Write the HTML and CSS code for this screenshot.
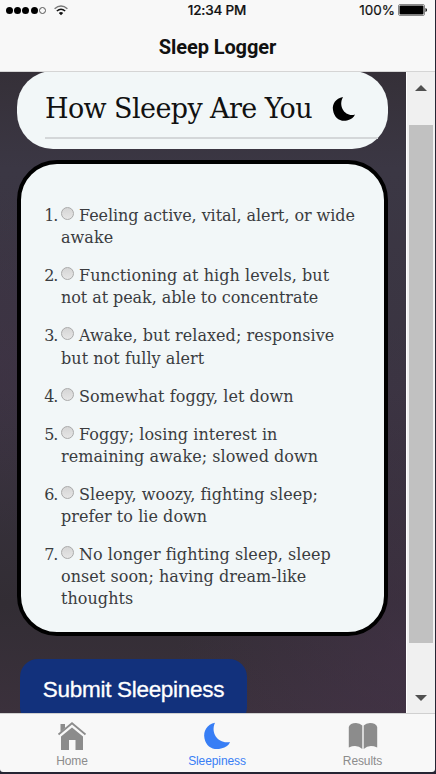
FILE: index.html
```html
<!DOCTYPE html>
<html lang="en">
<head>
<meta charset="utf-8">
<title>Sleep Logger</title>
<link rel="stylesheet" href="styles.css">
</head>
<body>
<div class="phone">
  <header class="header">
    <div class="status">
      <div class="signal">
        <i></i><i></i><i></i><i></i><i class="empty"></i>
        <svg class="wifi" width="14" height="11" viewBox="0 0 14 11" fill="none" stroke="#111" stroke-width="1.5"><path d="M.6 3.7Q7-1.7 13.4 3.7" stroke="#777"/><path d="M2.8 6Q7 2.5 11.2 6"/><path d="M4.8 8Q7 6.2 9.2 8L7 10.2Z" fill="#111" stroke="none"/></svg>
      </div>
      <time class="clock">12:34 PM</time>
      <div class="power"><span>100%</span><svg width="30" height="12" viewBox="0 0 30 12"><rect x=".5" y=".5" width="26" height="11" rx="1.5" fill="#fff" stroke="#888"/><rect x="1.5" y="1.5" width="24" height="9" rx="1"/><path d="M27.5 4Q29 4.5 29 6T27.5 8Z"/></svg></div>
    </div>
    <h1 class="title">Sleep Logger</h1>
  </header>
  <main class="viewport">
    <div class="content">
      <section class="heading">
        <div class="heading-row">
          <h2>How Sleepy Are You</h2>
          <svg class="moon" width="24" height="26" viewBox="0 0 24 26"><path d="M11 1C3.5 2.5 0 8 1 14C2.2 22 8 26 15 24.5C19 23.5 22 21.5 23 18.5C14 21.5 5.500 11 11 1Z"/></svg>
        </div>
      </section>
      <section class="card">
        <ol class="options">
          <li><span class="num">1.</span><label><span class="line tight"><i class="radio"></i>Feeling active, vital, alert, or wide</span><span class="line">awake</span></label></li>
          <li><span class="num">2.</span><label><span class="line"><i class="radio"></i>Functioning at high levels, but</span><span class="line tight">not at peak, able to concentrate</span></label></li>
          <li><span class="num">3.</span><label><span class="line"><i class="radio"></i>Awake, but relaxed; responsive</span><span class="line">but not fully alert</span></label></li>
          <li><span class="num">4.</span><label><span class="line"><i class="radio"></i>Somewhat foggy, let down</span></label></li>
          <li><span class="num">5.</span><label><span class="line"><i class="radio"></i>Foggy; losing interest in</span><span class="line">remaining awake; slowed down</span></label></li>
          <li><span class="num">6.</span><label><span class="line"><i class="radio"></i>Sleepy, woozy, fighting sleep;</span><span class="line">prefer to lie down</span></label></li>
          <li><span class="num">7.</span><label><span class="line"><i class="radio"></i>No longer fighting sleep, sleep</span><span class="line">onset soon; having dream-like</span><span class="line">thoughts</span></label></li>
        </ol>
      </section>
      <button class="submit">Submit Sleepiness</button>
    </div>
    <div class="scrollbar">
      <i class="arrow up"></i><i class="thumb"></i><i class="arrow down"></i>
    </div>
  </main>
  <nav class="tabs">
    <a class="tab"><svg width="30" height="30" viewBox="0 0 30 30"><path d="M3.500 3h4.500v4L3.500 11ZM15 6.500L26 15.500V29H18.500V19H12V29H4V15.500Z"/><path d="M1.500 13.500L15 2.200L28.500 13.500" fill="none" stroke="currentColor" stroke-width="1.800"/></svg><span>Home</span></a>
    <a class="tab active"><svg width="30" height="30" viewBox="0 0 30 30"><path d="M13 1.800C5 3.500 1 10 2.500 17.500C4.200 26 11.500 29.500 19 27.500C24 26.500 27 24 28 21C17 23.500 8 12.500 13 1.800Z"/></svg><span>Sleepiness</span></a>
    <a class="tab"><svg width="30" height="30" viewBox="0 0 30 30"><path d="M14.300 4.500V28Q9 23 .8 26.500V6Q2 2 8 2Q12 2 14.300 4.500ZM15.700 4.500V28Q21 23 29.200 26.500V6Q28 2 22 2Q18 2 15.700 4.500Z"/></svg><span>Results</span></a>
  </nav>
</div>
</body>
</html>
```
FILE: styles.css
```css
* { box-sizing: border-box; }
body { margin: 0; background: #252533; font-family: Roboto, sans-serif; }
.phone { width: 435px; height: 772px; display: flex; flex-direction: column; background: #f8f8f8; border-radius: 0 0 3px 3px; overflow: hidden; }
.header { height: 72px; flex: none; border-bottom: 1px solid #d5d5d5; }
.status { height: 20px; display: grid; grid-template-columns: 1fr auto 1fr; align-items: center; padding: 0 7px 0 6px; font-size: 14px; color: #111; -webkit-text-stroke: .2px; }
.signal { display: flex; align-items: center; gap: 1.2px; }
.signal i { width: 7px; height: 7px; border-radius: 50%; background: #000; }
.signal .empty { background: none; border: 1px solid #555; }
.wifi { margin-left: 7px; }
.clock { font: 500 13.5px Inter, sans-serif; letter-spacing: -.2px; }
.power { display: flex; justify-content: flex-end; align-items: center; gap: 3px; font-family: Inter, sans-serif; font-size: 13.5px; }
.title { margin: 15px 0 0; text-align: center; font: 700 20px/24px Roboto, sans-serif; letter-spacing: -.1px; color: #111; }
.viewport { height: 641px; flex: none; display: flex; overflow: hidden; }
.content { width: 406px; padding-left: 17px; background: radial-gradient(ellipse at 0 45%, #43314755, transparent 35%), radial-gradient(ellipse at 100% 90%, #49344f77, transparent 40%), linear-gradient(#353038, #3b3744 15%, #3a3441 50%, #322d34 83%, #3b313c); }
.heading { width: 371px; height: 78px; background: #f2f7f8; border-radius: 36px; padding: 18px 10px 0 28px; margin-top: -1px; clip-path: inset(1px 0 0 0); }
.heading-row { height: 50px; display: flex; justify-content: space-between; border-bottom: 2px solid #d4d7d9; padding-right: 22px; }
.heading h2 { margin: 0; white-space: nowrap; font: 400 27px/40px "Roboto Slab", "DejaVu Serif", serif; letter-spacing: -.6px; color: #111; }
.moon { margin-top: 7px; }
.card { width: 371px; height: 476px; margin-top: 11px; border: 4px solid #000; border-radius: 40px; background: #f2f7f8; padding-top: 41px; }
.options { list-style: none; margin: 0; padding: 0 0 0 19px; display: flex; flex-direction: column; gap: 15.8px; color: #3a3c3f; font: 400 16px/22.2px "Roboto Slab", "DejaVu Serif", serif; letter-spacing: .05px; }
.options li { display: flex; }
.num { width: 21px; padding-right: 4px; text-align: right; letter-spacing: -1.3px; }
.line { display: block; white-space: nowrap; }
.tight { letter-spacing: -.07px; }
.radio { display: inline-block; width: 13px; height: 13px; margin-right: 5px; border: 1px solid #aaa; border-radius: 50%; background: linear-gradient(#d5d5d5, #e6e6e6); position: relative; top: -1px; }
.submit { display: block; width: 227px; height: 66px; margin: 23px 0 0 3px; padding: 0 0 4px; border: 0; border-radius: 18px; background: #12317c; color: #fff; font: 400 22.5px "Liberation Sans", sans-serif; letter-spacing: -.3px; -webkit-text-stroke: .3px; white-space: nowrap; }
.scrollbar { width: 29px; display: flex; flex-direction: column; align-items: center; background: #f0f0f0; border-left: 1px solid #fff; }
.arrow { border: 6px solid transparent; }
.up { border-top: 0; border-bottom-color: #505050; margin-top: 13px; }
.down { border-bottom: 0; border-top-color: #505050; margin-top: 52px; }
.thumb { width: 24px; height: 518px; margin-top: 34px; background: #c1c1c1; }
.tabs { height: 59px; flex: none; border-top: 1px solid #d0d0d0; padding: 7px 0 0; display: grid; grid-template-columns: 144px 146px 145px; }
.tab { display: flex; flex-direction: column; align-items: center; color: #8c8c8c; font: 400 12px/14px "Liberation Sans", sans-serif; letter-spacing: -.1px; gap: 3px; }
.tab svg { fill: currentColor; }
.active { color: #387ef5; }
```
